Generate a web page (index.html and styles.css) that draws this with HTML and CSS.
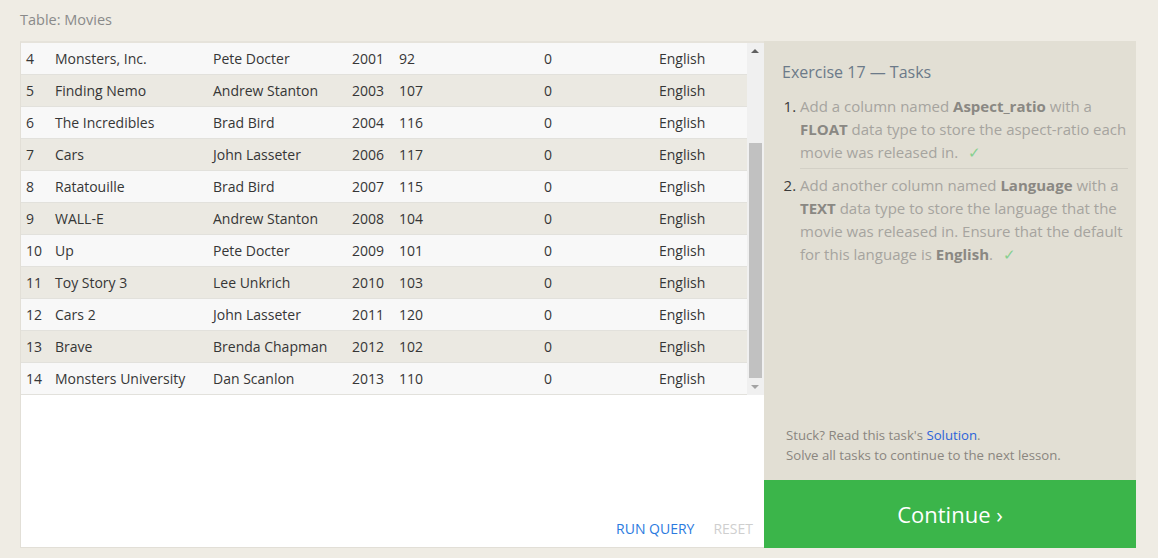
FILE: index.html
```html
<!DOCTYPE html>
<html>
<head>
<meta charset="utf-8">
<title>Exercise 17 — Tasks</title>
<link rel="stylesheet" href="styles.css">
</head>
<body>
<div class="page">
  <div class="table-label">Table: Movies</div>
  <div class="workspace">
    <div class="query-pane">
      <div class="results">
        <div class="rows">
          <div class="row"><span class="c-id">4</span><span class="c-title">Monsters, Inc.</span><span class="c-dir">Pete Docter</span><span class="c-year">2001</span><span class="c-len">92</span><span class="c-asp">0</span><span class="c-lang">English</span></div>
          <div class="row alt"><span class="c-id">5</span><span class="c-title">Finding Nemo</span><span class="c-dir">Andrew Stanton</span><span class="c-year">2003</span><span class="c-len">107</span><span class="c-asp">0</span><span class="c-lang">English</span></div>
          <div class="row"><span class="c-id">6</span><span class="c-title">The Incredibles</span><span class="c-dir">Brad Bird</span><span class="c-year">2004</span><span class="c-len">116</span><span class="c-asp">0</span><span class="c-lang">English</span></div>
          <div class="row alt"><span class="c-id">7</span><span class="c-title">Cars</span><span class="c-dir">John Lasseter</span><span class="c-year">2006</span><span class="c-len">117</span><span class="c-asp">0</span><span class="c-lang">English</span></div>
          <div class="row"><span class="c-id">8</span><span class="c-title">Ratatouille</span><span class="c-dir">Brad Bird</span><span class="c-year">2007</span><span class="c-len">115</span><span class="c-asp">0</span><span class="c-lang">English</span></div>
          <div class="row alt"><span class="c-id">9</span><span class="c-title">WALL-E</span><span class="c-dir">Andrew Stanton</span><span class="c-year">2008</span><span class="c-len">104</span><span class="c-asp">0</span><span class="c-lang">English</span></div>
          <div class="row"><span class="c-id">10</span><span class="c-title">Up</span><span class="c-dir">Pete Docter</span><span class="c-year">2009</span><span class="c-len">101</span><span class="c-asp">0</span><span class="c-lang">English</span></div>
          <div class="row alt"><span class="c-id">11</span><span class="c-title">Toy Story 3</span><span class="c-dir">Lee Unkrich</span><span class="c-year">2010</span><span class="c-len">103</span><span class="c-asp">0</span><span class="c-lang">English</span></div>
          <div class="row"><span class="c-id">12</span><span class="c-title">Cars 2</span><span class="c-dir">John Lasseter</span><span class="c-year">2011</span><span class="c-len">120</span><span class="c-asp">0</span><span class="c-lang">English</span></div>
          <div class="row alt"><span class="c-id">13</span><span class="c-title">Brave</span><span class="c-dir">Brenda Chapman</span><span class="c-year">2012</span><span class="c-len">102</span><span class="c-asp">0</span><span class="c-lang">English</span></div>
          <div class="row"><span class="c-id">14</span><span class="c-title">Monsters University</span><span class="c-dir">Dan Scanlon</span><span class="c-year">2013</span><span class="c-len">110</span><span class="c-asp">0</span><span class="c-lang">English</span></div>
        </div>
        <div class="scrollbar">
          <div class="arrow up"></div>
          <div class="track"><div class="thumb"></div></div>
          <div class="arrow down"></div>
        </div>
      </div>
      <div class="query-actions">
        <span class="btn-run">RUN QUERY</span>
        <span class="btn-reset">RESET</span>
      </div>
    </div>
    <div class="tasks-pane">
      <div class="tasks-body">
        <h2 class="tasks-title">Exercise 17 — Tasks</h2>
        <ol class="task-list">
          <li class="task">Add a column named <b>Aspect_ratio</b> with a <b>FLOAT</b> data type to store the aspect-ratio each movie was released in. <span class="check">✓</span></li>
          <li class="task">Add another column named <b>Language</b> with a <b>TEXT</b> data type to store the language that the movie was released in. Ensure that the default for this language is <b>English</b>. <span class="check">✓</span></li>
        </ol>
        <div class="hint">
          <div>Stuck? Read this task's <a class="link">Solution</a>.</div>
          <div>Solve all tasks to continue to the next lesson.</div>
        </div>
      </div>
      <div class="continue">Continue ›</div>
    </div>
  </div>
</div>
</body>
</html>
```
FILE: styles.css
```css
* { box-sizing: border-box; }
html, body { margin: 0; padding: 0; }
body {
  background: #efece4;
  font-family: "Open Sans", "Noto Sans", "Liberation Sans", sans-serif;
  color: #3a3a3a;
  width: 1158px;
  height: 558px;
  overflow: hidden;
}
.page {
  padding: 9px 22px 10px 20px;
}
.table-label {
  font-size: 14.5px;
  color: #8a8a8a;
  height: 22px;
  line-height: 22px;
  margin-bottom: 10px;
}
.workspace {
  display: flex;
  height: 507px;
}
.query-pane {
  width: 744px;
  background: #fff;
  border-left: 1px solid #e2dfd7;
  border-bottom: 1px solid #e2dfd7;
  border-top: 2px solid #e6e3db;
  display: flex;
  flex-direction: column;
}
.results {
  display: flex;
  height: 352px;
}
.rows {
  flex: 1;
}
.row {
  display: flex;
  height: 32px;
  align-items: center;
  background: #f8f8f8;
  border-bottom: 1px solid #e2e1dc;
  font-size: 14px;
  color: #363636;
  white-space: nowrap;
}
.row.alt { background: #ebe9e2; }
.row span { display: block; }
.c-id { width: 34px; padding-left: 5px; }
.c-title { width: 158px; }
.c-dir { width: 139px; }
.c-year { width: 47px; }
.c-len { width: 145px; }
.c-asp { width: 115px; }
.c-lang { flex: 1; }
.scrollbar {
  width: 17px;
  background: #f0f0f0;
  display: flex;
  flex-direction: column;
}
.arrow {
  height: 17px;
  position: relative;
}
.arrow::after {
  content: "";
  position: absolute;
  left: 4px;
  border-left: 4px solid transparent;
  border-right: 4px solid transparent;
}
.arrow.up::after { top: 6px; border-bottom: 4px solid #606060; }
.arrow.down::after { top: 7px; border-top: 4px solid #a3a3a3; }
.track {
  flex: 1;
  padding: 83px 2px 0 2px;
}
.thumb {
  height: 235px;
  background: #c1c1c1;
}
.query-actions {
  margin-top: auto;
  display: flex;
  justify-content: flex-end;
  gap: 19px;
  padding: 0 11px 8px 0;
  font-size: 14px;
  line-height: 20px;
}
.btn-run { color: #2b7ae0; }
.btn-reset { color: #cfcfcf; }
.tasks-pane {
  width: 372px;
  background: #e2dfd4;
  display: flex;
  flex-direction: column;
}
.tasks-body {
  flex: 1;
  padding: 20px 8px 0 18px;
  display: flex;
  flex-direction: column;
}
.tasks-title {
  margin: 0;
  font-weight: 400;
  font-size: 16px;
  line-height: 22px;
  color: #6c7a89;
}
.task-list {
  margin: 12px 0 0 0;
  padding: 0 0 0 18px;
  font-size: 15px;
  line-height: 23px;
  color: #a6a49f;
}
.task {
  padding: 0 0 4px 0;
}
.task::marker { color: #3a3a3a; }
.task + .task {
  border-top: 1px solid #d3d0c6;
  padding-top: 5px;
}
.task b { color: #8a8883; font-weight: 700; }
.check { color: #86d08f; margin-left: 6px; }
.hint {
  margin-top: auto;
  padding: 0 0 15px 4px;
  font-size: 13.2px;
  line-height: 20px;
  color: #8a8680;
}
.link { color: #2b63d9; }
.continue {
  height: 68px;
  background: #3bb54a;
  color: #fff;
  font-size: 22px;
  display: flex;
  align-items: center;
  justify-content: center;
}
```
